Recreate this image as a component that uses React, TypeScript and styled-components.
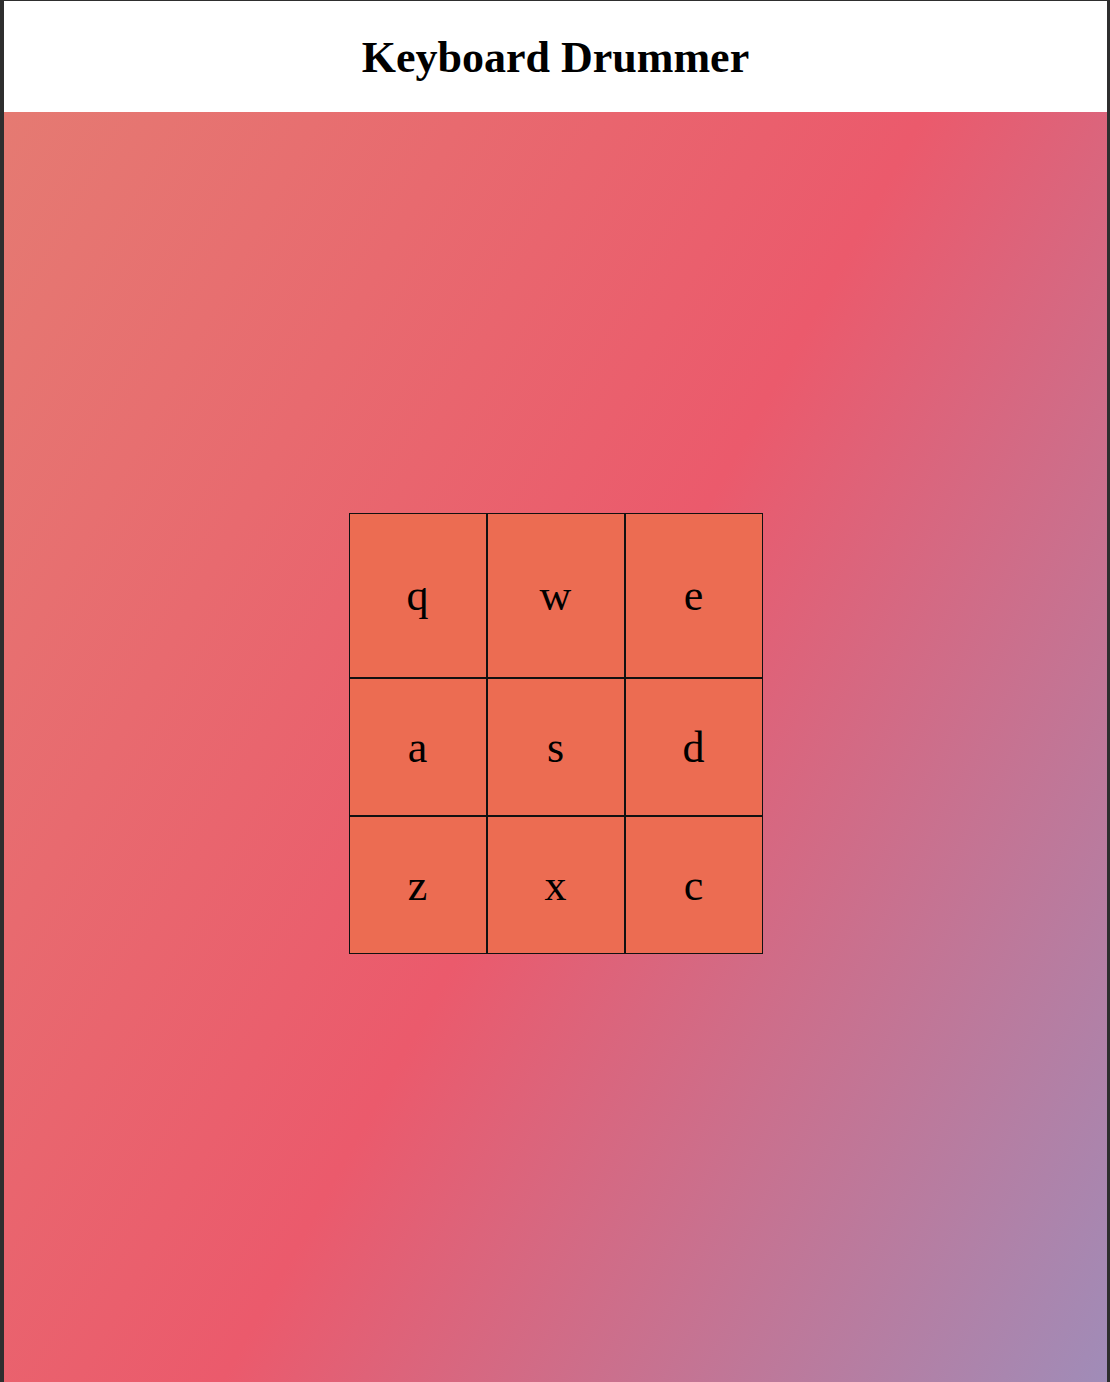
import styled, { createGlobalStyle } from "styled-components";

const GlobalStyle = createGlobalStyle`
  html, body {
    margin: 0;
    padding: 0;
    background: #2e2e2e;
  }
  body {
    font-family: "Liberation Serif", "Times New Roman", serif;
    overflow: hidden;
  }
`;

const Frame = styled.div`
  margin: 1px 3px 0 4px;
  min-height: 1381px;
  display: flex;
  flex-direction: column;
`;

const Header = styled.header`
  height: 111px;
  background: #ffffff;
  display: flex;
  align-items: center;
  justify-content: center;
`;

const Title = styled.h1`
  margin: 0;
  font-size: 44px;
  font-weight: 700;
  color: #000;
  padding-top: 2px;
`;

const Stage = styled.main`
  flex: 1;
  display: flex;
  justify-content: center;
  align-items: flex-start;
  padding-top: 401px;
  background: linear-gradient(119deg, #e57a72 0%, #eb5a6c 51%, #a08cb8 100%);
`;

const Pad = styled.div`
  display: grid;
  grid-template-columns: repeat(3, 138px);
  grid-template-rows: 165px 138px 138px;
`;

const Key = styled.button`
  box-sizing: border-box;
  margin: 0;
  padding: 0;
  border: 1px solid #111;
  border-radius: 0;
  background: #ec6c52;
  color: #000;
  font-family: "Liberation Serif", "Times New Roman", serif;
  font-size: 44px;
  display: flex;
  align-items: center;
  justify-content: center;
  cursor: pointer;
`;

const keys = ["q", "w", "e", "a", "s", "d", "z", "x", "c"];

export default function App() {
  return (
    <>
      <GlobalStyle />
      <Frame>
        <Header>
          <Title>Keyboard Drummer</Title>
        </Header>
        <Stage>
          <Pad>
            {keys.map((k) => (
              <Key key={k}>{k}</Key>
            ))}
          </Pad>
        </Stage>
      </Frame>
    </>
  );
}
